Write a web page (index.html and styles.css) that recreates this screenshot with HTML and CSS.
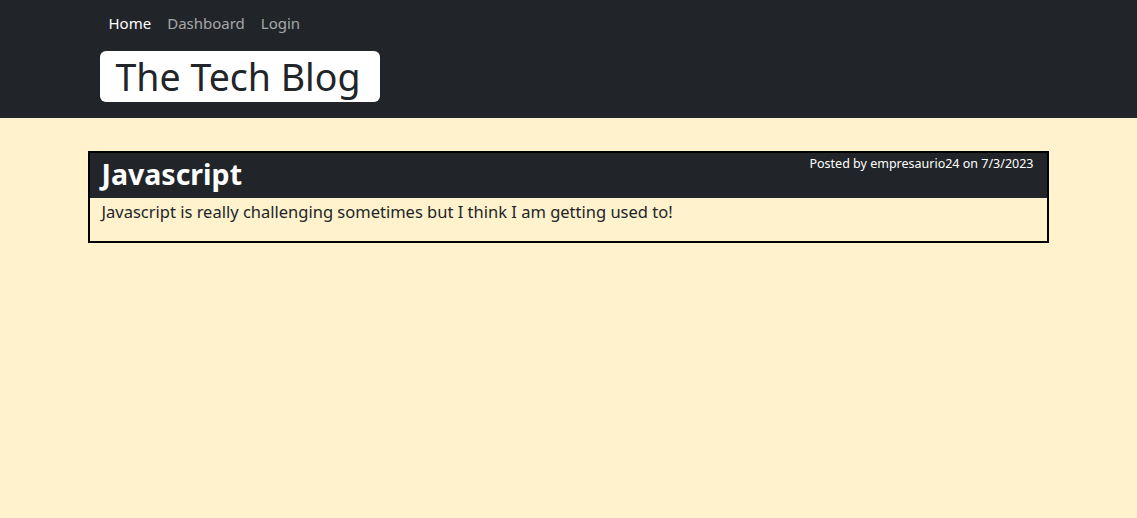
FILE: index.html
```html
<!DOCTYPE html>
<html lang="en">
<head>
<meta charset="utf-8">
<title>The Tech Blog</title>
<link rel="stylesheet" href="styles.css">
</head>
<body>
<header class="site-header">
  <div class="container">
    <nav class="nav">
      <a class="nav-link active" href="#">Home</a>
      <a class="nav-link" href="#">Dashboard</a>
      <a class="nav-link" href="#">Login</a>
    </nav>
    <h1 class="brand">The Tech Blog</h1>
  </div>
</header>
<main class="container main">
  <article class="post">
    <div class="post-head">
      <h2 class="post-title">Javascript</h2>
      <p class="post-meta">Posted by empresaurio24 on 7/3/2023</p>
    </div>
    <div class="post-body">
      <p>Javascript is really challenging sometimes but I think I am getting used to!</p>
    </div>
  </article>
</main>
</body>
</html>
```

FILE: styles.css
```css
* { box-sizing: border-box; }
html, body { margin: 0; padding: 0; }
body {
  background: #fff2cc;
  color: #212529;
  font-family: "Noto Sans", "Open Sans", sans-serif;
  font-size: 16px;
  line-height: 1.5;
  min-height: 518px;
}
.container {
  width: 960px;
  margin: 0 auto;
  padding: 0 12px;
}
.site-header {
  background: #212529;
  height: 118px;
  padding-top: 11px;
}
.nav {
  display: flex;
  height: 24px;
}
.nav-link {
  color: rgba(255,255,255,0.6);
  text-decoration: none;
  padding: 0 8px;
  font-size: 15px;
  line-height: 24px;
}
.nav-link.active { color: #fff; }
.brand {
  display: inline-block;
  margin: 16px 0 0 -1px;
  background: #fff;
  border-radius: 6px;
  padding: 0 19px 0 16px;
  height: 51px;
  font-size: 37.5px;
  font-weight: 400;
  line-height: 51px;
  color: #212529;
}
.main { padding-top: 33px; padding-left: 0; padding-right: 0; }
.post {
  border: 2px solid #000;
  margin-left: -1px;
}
.post-head {
  background: #212529;
  color: #fff;
  display: flex;
  justify-content: space-between;
  align-items: flex-start;
  height: 45px;
  padding: 0 13px 0 12px;
}
.post-title {
  margin: 0;
  font-size: 28.5px;
  font-weight: 700;
  line-height: 42px;
}
.post-meta {
  margin: 0;
  font-size: 12.5px;
  line-height: 20px;
  padding-top: 1px;
}
.post-body {
  padding: 2px 12px 17px;
}
.post-body p {
  margin: 0;
  font-size: 16.5px;
  line-height: 24px;
}
```
